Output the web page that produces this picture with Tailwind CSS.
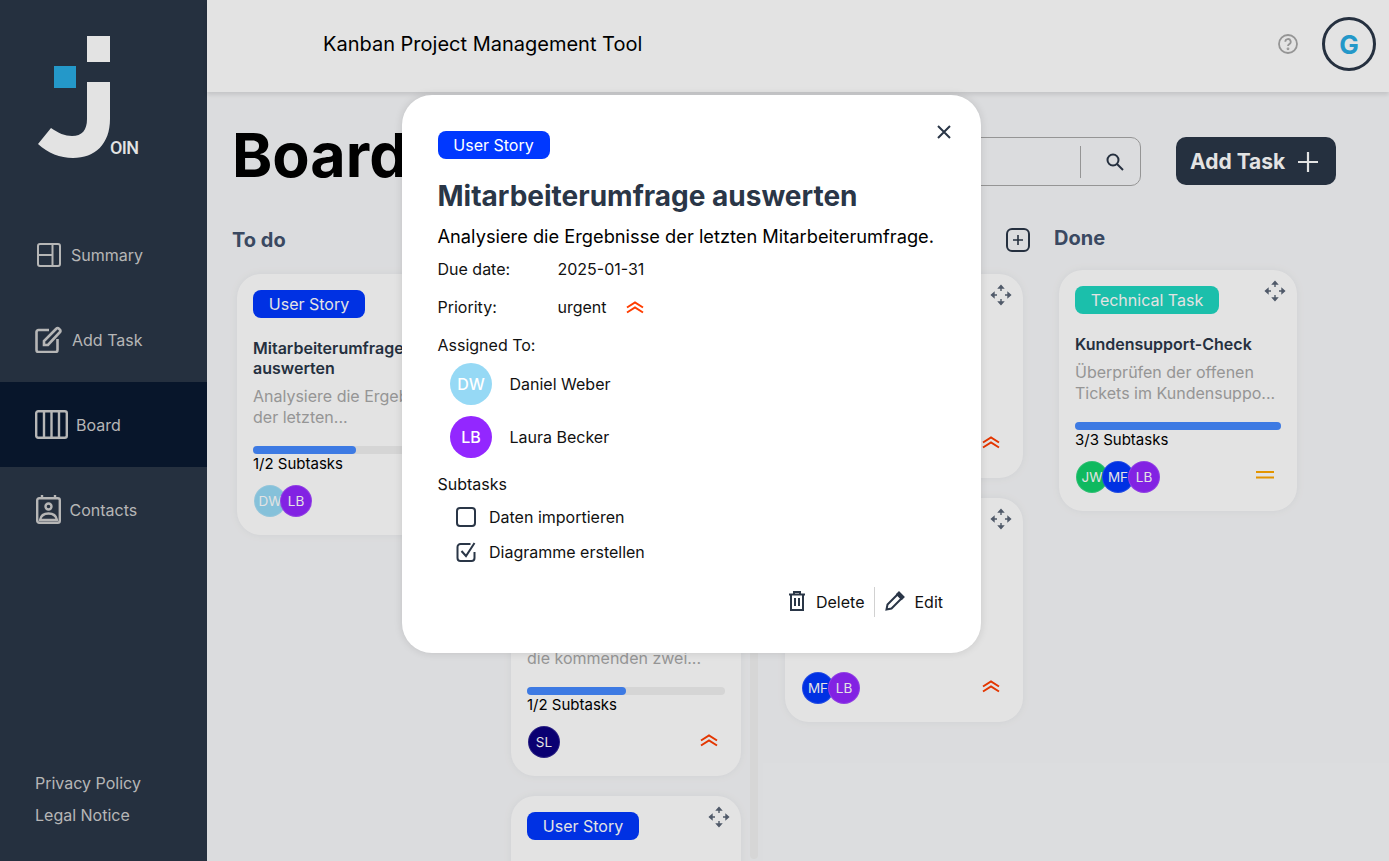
<!DOCTYPE html>
<html lang="en">
<head>
    <meta charset="UTF-8">
    <title>Join - Board</title>
    <script src="https://cdn.jsdelivr.net/npm/@tailwindcss/browser@4"></script>
</head>
<body class="relative h-[861px] overflow-hidden flex bg-[#f7f8fa] font-['Inter','Liberation_Sans',sans-serif] text-black">

    <!-- sidebar -->
    <aside class="w-[207px] shrink-0 h-full bg-[#2a3647] flex flex-col">
        <div class="h-[212px] relative shrink-0">
            <svg class="absolute left-0 top-0" width="112" height="160" viewBox="0 0 112 160">
                <rect x="87" y="36" width="23" height="26" fill="#fff"/>
                <rect x="54" y="66" width="22" height="22" fill="#29abe2"/>
                <path d="M87 82h23v37c0 25-15 39-37 39-13 0-25-5-35-14l13-16c7 5 14 8 21 8 10 0 15-6 15-17z" fill="#fff"/>
            </svg>
            <span class="absolute left-[110px] top-[137px] text-[18px] leading-[22px] font-medium tracking-[-0.6px] text-white font-['Roboto',sans-serif]">OIN</span>
        </div>
        <nav class="flex flex-col text-[16px] text-[#cdcdcd]">
            <a class="h-[85px] flex items-center pl-[37px] gap-[10px]">
                <svg width="24" height="24" viewBox="0 0 24 24" fill="none" stroke="#cdcdcd" stroke-width="2"><rect x="1" y="1" width="22" height="22" rx="2"/><path d="M15.500 1v22M1 12h14.500"/></svg>
                <span>Summary</span>
            </a>
            <a class="h-[85px] flex items-center pl-[35px] gap-[10px]">
                <svg width="27" height="27" viewBox="0 0 27 27" fill="none" stroke="#cdcdcd" stroke-width="2.600"><path d="M14 4H3.500a2 2 0 0 0-2 2v18a2 2 0 0 0 2 2h17a2 2 0 0 0 2-2V13"/><path d="M9 19v-4L21.500 2.500a1.500 1.500 0 0 1 2.200 0l1.300 1.300a1.500 1.500 0 0 1 0 2.200L13 19z"/></svg>
                <span>Add Task</span>
            </a>
            <a class="h-[85px] flex items-center pl-[35px] gap-[9px] bg-[#091931]">
                <svg width="33" height="29" viewBox="0 0 33 29" fill="none" stroke="#cdcdcd" stroke-width="2.400"><rect x="1.200" y="1.200" width="30.600" height="26.600" rx="2"/><path d="M9 1v27M16.500 1v27M24 1v27"/></svg>
                <span class="-ml-[1px]">Board</span>
            </a>
            <a class="h-[85px] flex items-center pl-[36px] gap-[9px]">
                <svg width="25" height="29" viewBox="0 0 25 29" fill="none" stroke="#cdcdcd" stroke-width="2.400"><rect x="1.200" y="3.200" width="22.600" height="24.600" rx="2"/><path d="M6 0v4M19 0v4"/><circle cx="12.500" cy="11.500" r="3"/><path d="M4 25c1-5 4.500-6.500 8.500-6.500S20 20 21 25z"/></svg>
                <span class="-ml-[0.5px]">Contacts</span>
            </a>
        </nav>
        <div class="mt-auto pb-[34px] pl-[35px] flex flex-col gap-[8px] text-[16px] leading-[24px] text-[#cdcdcd]">
            <a>Privacy Policy</a>
            <a>Legal Notice</a>
        </div>
    </aside>

    <div class="flex-1 min-w-0 flex flex-col">
        <!-- header -->
        <header class="h-[92px] shrink-0 bg-white shadow-[0_3px_4px_rgba(0,0,0,0.1)] flex items-center pl-[116px] pr-[13px] z-10">
            <h2 class="text-[20px] leading-[28px] -mt-[4px]">Kanban Project Management Tool</h2>
            <svg class="ml-auto -mt-[4px]" width="20" height="20" viewBox="0 0 20 20" fill="none" stroke="#a8a8a8" stroke-width="1.800"><circle cx="10" cy="10" r="9"/><path d="M7.300 7.700a2.700 2.700 0 1 1 4 2.400c-.9.500-1.300 1-1.300 2"/><circle cx="10" cy="14.800" r=".5"/></svg>
            <div class="ml-[24px] -mt-[4px] w-[54px] h-[54px] rounded-full border-[3px] border-[#2a3647] flex items-center justify-center text-[26px] font-bold text-[#29abe2]">G</div>
        </header>

        <main class="flex-1 min-h-0 px-[26px] overflow-hidden">
            <div class="flex items-center h-[49px] mt-[45px]">
                <h1 class="text-[61px] leading-[49px] font-bold -mt-[12px] -ml-[1px]">Board</h1>
                <div class="ml-auto w-[320px] h-[49px] rounded-[10px] border border-[#a8a8a8] flex items-center justify-end">
                    <span class="w-px h-[32px] bg-[#a8a8a8]"></span>
                    <span class="w-[59px] pl-[8px] flex justify-center">
                        <svg width="20" height="20" viewBox="0 0 20 20" fill="none" stroke="#2a3647" stroke-width="2"><circle cx="8" cy="8" r="5.500"/><path d="M12 12l6 6"/></svg>
                    </span>
                </div>
                <button class="ml-[35px] mr-[27px] w-[160px] h-[48px] self-start rounded-[10px] bg-[#2a3647] text-white text-[21px] font-bold flex items-center pl-[14px] pt-[2px] gap-[13px]">
                    Add Task
                    <svg width="20" height="20" viewBox="0 0 20 20" stroke="#fff" stroke-width="2.200"><path d="M10 0v20M0 10h20"/></svg>
                </button>
            </div>

            <div class="flex mt-[42px]">
                <section class="w-[274px] shrink-0">
                    <h3 class="text-[20px] leading-[24px] font-bold text-[#42526e] -ml-[1px]">To do</h3>
                    <div id="col1" class="mt-[22px] ml-[4px] w-[238px] flex flex-col gap-[20px]"></div>
                </section>
                <section class="w-[247px] shrink-0 relative">
                    <h3 class="text-[20px] leading-[24px] font-bold text-[#42526e] ml-[4px]">In progress</h3>
                    <div id="col2" class="mt-[22px] ml-[4px] w-[230px] flex flex-col gap-[20px]"></div>
                    <span class="absolute left-[243px] top-[-100px] h-[731px] w-[8px] rounded bg-[#f1f1f1]"></span>
                </section>
                <section class="w-[300px] shrink-0 pl-[31px]">
                    <div class="flex items-center justify-between w-[245px] h-[24px]">
                        <h3 class="text-[20px] leading-[24px] font-bold text-[#42526e]">Await feedback</h3>
                        <span class="w-[24px] h-[24px] rounded-[6px] border-2 border-[#2a3647] flex items-center justify-center">
                            <svg width="10" height="10" viewBox="0 0 10 10" stroke="#2a3647" stroke-width="1.600"><path d="M5 0v10M0 5h10"/></svg>
                        </span>
                    </div>
                    <div id="col3" class="mt-[22px] w-[238px] flex flex-col gap-[20px]"></div>
                </section>
                <section class="flex-1 -mt-[2px]">
                    <h3 class="text-[20px] leading-[24px] font-bold text-[#42526e]">Done</h3>
                    <div id="col4" class="mt-[20px] ml-[5px] w-[238px] flex flex-col gap-[20px]"></div>
                </section>
            </div>
        </main>
    </div>

    <!-- dim layer behind the dialog -->
    <div class="absolute inset-0 bg-black/[0.11] z-20"></div>

    <!-- task dialog -->
    <div class="absolute left-[402px] top-[95px] w-[579px] h-[558px] bg-white rounded-[30px] shadow-[0_0_8px_rgba(0,0,0,0.12)] z-30 pt-[36px] pl-[35.5px] pr-[36px] text-[16px] leading-[24px] text-[#111]">
        <button class="absolute right-[29px] top-[29px]">
            <svg class="block" width="16" height="16" viewBox="0 0 16 16" stroke="#2a3647" stroke-width="2"><path d="M2 2l12 12M14 2L2 14"/></svg>
        </button>
        <span class="block w-[112px] h-[28px] rounded-[8px] bg-[#0038ff] text-white text-center leading-[28px]">User Story</span>
        <h2 class="mt-[20px] text-[28px] leading-[34px] font-bold text-[#2a3647]">Mitarbeiterumfrage auswerten</h2>
        <p class="mt-[11px] text-[18.25px] text-black">Analysiere die Ergebnisse der letzten Mitarbeiterumfrage.</p>
        <div class="mt-[9px] flex"><span class="w-[120px]">Due date:</span><span>2025-01-31</span></div>
        <div class="mt-[14px] flex items-center"><span class="w-[120px]">Priority:</span><span>urgent</span>
            <svg class="ml-[19px]" width="18" height="14" viewBox="0 0 18 14" fill="none" stroke="#ff3d00" stroke-width="2"><path d="M1 7.500l8-5 8 5M1 12.500l8-5 8 5"/></svg>
        </div>
        <div class="mt-[14px]">Assigned To:</div>
        <div class="mt-[6px] ml-[12.5px] flex flex-col gap-[11px]">
            <div class="flex items-center gap-[17.5px]">
                <span class="w-[42px] h-[42px] rounded-full bg-[#96d9f5] text-white font-medium flex items-center justify-center">DW</span>Daniel Weber
            </div>
            <div class="flex items-center gap-[17.5px]">
                <span class="w-[42px] h-[42px] rounded-full bg-[#9327ff] text-white font-medium flex items-center justify-center">LB</span>Laura Becker
            </div>
        </div>
        <div class="mt-[14px]">Subtasks</div>
        <div class="mt-[9px] ml-[18.5px] flex flex-col gap-[11px]">
            <label class="flex items-center gap-[13px]">
                <span class="w-[20px] h-[20px] rounded-[4px] border-2 border-[#2a3647]"></span>Daten importieren
            </label>
            <label class="flex items-center gap-[13px]">
                <svg width="20" height="20" viewBox="0 0 20 20" fill="none" stroke="#2a3647" stroke-width="2"><path d="M18.500 10v6a3 3 0 0 1-3 3h-11a3 3 0 0 1-3-3V5a3 3 0 0 1 3-3h10"/><path d="M5.500 9l4.500 5L18.500 1"/></svg>
                Diagramme erstellen
            </label>
        </div>
        <div class="mt-[23px] flex items-center justify-end h-[30px] pr-[2px]">
            <svg class="-mt-[2px]" width="18" height="20" viewBox="0 0 18 20" fill="none" stroke="#2a3647" stroke-width="2"><path d="M1 3.500h16M6 3V1h6v2M3 3.500V19h12V3.500M7 7v8M11 7v8"/></svg>
            <span class="ml-[10px]">Delete</span>
            <span class="w-px h-[30px] bg-[#d1d1d1] mx-[10px]"></span>
            <svg class="-mt-[2px]" width="20" height="20" viewBox="0 0 20 20" fill="none" stroke="#2a3647" stroke-width="2"><path d="M1.500 18.500l1-5L12.500 3.500l4 4-10 10z"/><path d="M14 1.500l4.500 4.500-1.800 1.800-4.500-4.500z" fill="#2a3647"/></svg>
            <span class="ml-[9px]">Edit</span>
        </div>
    </div>

    <script>
        const moveIcon = `<svg class="absolute right-[11px] top-[10px]" width="22" height="22" viewBox="0 0 22 22" fill="none" stroke="#5a6576" stroke-width="1.400"><path d="M11 2v5M11 15v5M2 11h5M15 11h5"/><path d="M8.800 4L11 1.500 13.200 4zM8.800 18L11 20.500 13.200 18zM4 8.800L1.500 11 4 13.200zM18 8.800L20.500 11 18 13.200z" fill="#5a6576"/></svg>`;
        const urgentIcon = `<svg class="block" width="18" height="14" viewBox="0 0 18 14" fill="none" stroke="#ff3d00" stroke-width="2"><path d="M1 7.500l8-5 8 5M1 12.500l8-5 8 5"/></svg>`;
        const mediumIcon = `<svg class="block" width="18" height="8" viewBox="0 0 18 8" stroke="#ffa800" stroke-width="2"><path d="M0 1h18M0 6.500h18"/></svg>`;

        const avatarColors = {
            DW: 'bg-[#96d9f5]',
            LB: 'bg-[#9327ff]',
            MF: 'bg-[#0038ff]',
            JW: 'bg-[#11d06b]',
            SL: 'bg-[#0c0080]'
        };

        function renderCard(card) {
            const badgeColor = card.label === 'User Story' ? 'bg-[#0038ff] w-[112px]' : 'bg-[#1fd7c1] w-[144px]';
            const avatars = card.people.map(p => `<span class="w-[32px] h-[32px] -mr-[6px] rounded-full border border-white/15 flex items-center justify-center text-[13.5px] text-white ${avatarColors[p]}">${p}</span>`).join('');
            const progress = card.subtasks ? `
                    <div class="mt-[18px] h-[8px] rounded bg-[#f0f0f0]"><div class="h-full rounded bg-[#4589ff]" style="width:${card.done}%"></div></div>
                    <div class="text-[15px] leading-[20px]">${card.subtasks}</div>` : '';
            return `
                <article class="relative shrink-0 flex flex-col rounded-[24px] bg-white shadow-[0_0_10px_rgba(0,0,0,0.06)] px-[16px] pt-[16px] pb-[18px] ${card.height || ''}">
                    ${moveIcon}
                    <span class="block h-[28px] rounded-[8px] text-center text-[16px] leading-[28px] text-white ${badgeColor}">${card.label}</span>
                    <h4 class="mt-[20px] text-[16px] leading-[20px] font-semibold text-[#2a3647]">${card.title}</h4>
                    <p class="mt-[8px] text-[16px] leading-[21px] text-[#a8a8a8]">${card.text}</p>
                    ${progress}
                    <div class="mt-auto pt-[11px] flex items-center justify-between">
                        <div class="flex pl-[1px]">${avatars}</div>
                        <span class="mr-[7px] mb-[4px]">${card.priority === 'urgent' ? urgentIcon : mediumIcon}</span>
                    </div>
                </article>`;
        }

        const columns = {
            col1: [{ label: 'User Story', title: 'Mitarbeiterumfrage auswerten', text: 'Analysiere die Ergebnisse der letzten...', done: 50, subtasks: '1/2 Subtasks', people: ['DW', 'LB'], priority: 'urgent' }],
            col2: [
                { label: 'User Story', title: 'Urlaubsplanung', text: 'Urlaubsanträge für das nächste Quartal...', done: 50, subtasks: '1/2 Subtasks', people: ['SL'], priority: 'urgent' },
                { label: 'User Story', title: 'Teammeeting', text: 'Aufgabenverteilung für die kommenden zwei...', done: 50, subtasks: '1/2 Subtasks', people: ['SL'], priority: 'urgent' },
                { label: 'User Story', title: 'Budgetplanung', text: 'Budget für das nächste Quartal...', done: 50, subtasks: '1/2 Subtasks', people: ['SL'], priority: 'urgent' }
            ],
            col3: [
                { label: 'User Story', title: 'Angebot prüfen', text: 'Angebot prüfen...', people: ['MF'], priority: 'urgent', height: 'h-[204px]' },
                { label: 'User Story', title: 'Schulung planen', text: 'Termine festlegen...', people: ['MF', 'LB'], priority: 'urgent', height: 'h-[224px]' }
            ],
            col4: [{ label: 'Technical Task', title: 'Kundensupport-Check', text: 'Überprüfen der offenen Tickets im Kundensuppo...', done: 100, subtasks: '3/3 Subtasks', people: ['JW', 'MF', 'LB'], priority: 'medium' }]
        };

        Object.keys(columns).forEach(id => {
            document.getElementById(id).innerHTML = columns[id].map(renderCard).join('');
        });
    </script>
</body>
</html>
